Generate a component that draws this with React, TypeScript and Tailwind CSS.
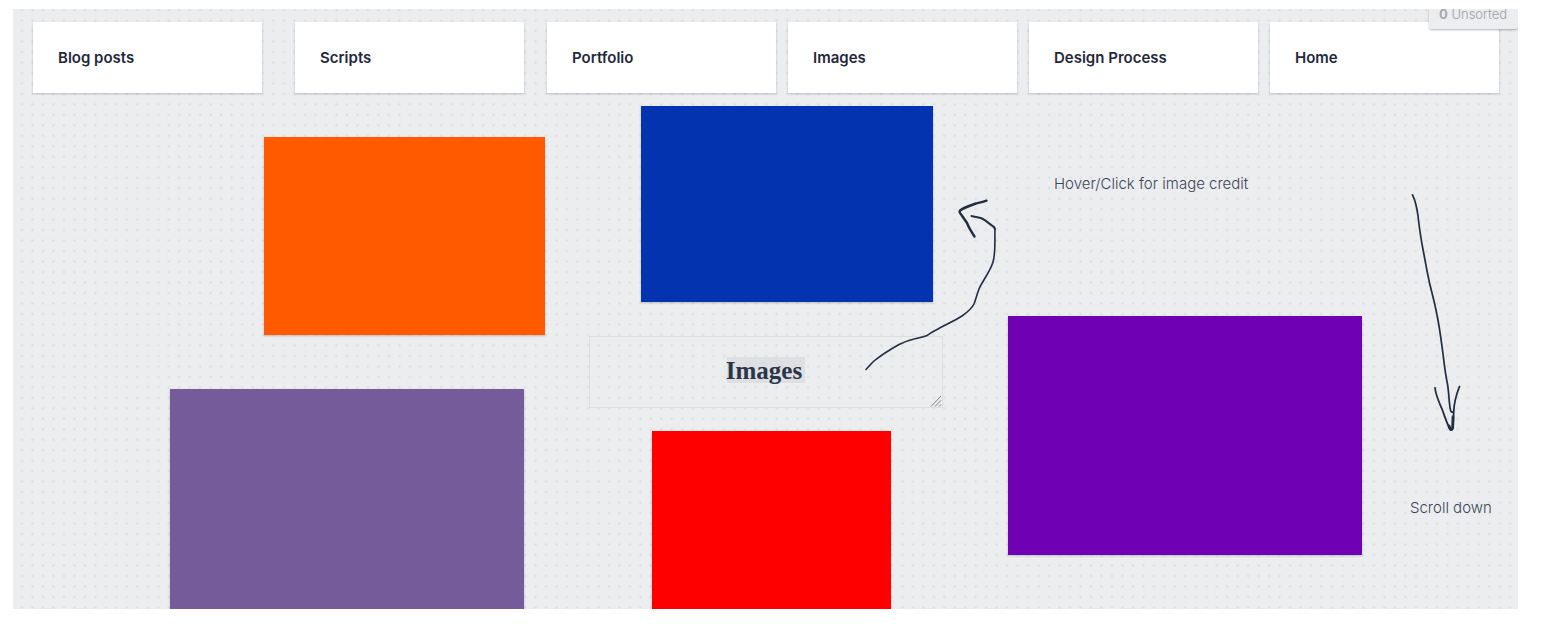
import React from "react";

const navCards = [
  { label: "Blog posts", spacing: "mr-[21px]" },
  { label: "Scripts", spacing: "mr-[11px]" },
  { label: "Portfolio", spacing: "" },
  { label: "Images", spacing: "" },
  { label: "Design Process", spacing: "" },
  { label: "Home", spacing: "" },
];

const swatches = [
  "left-[251px] top-[128px] h-[198px] w-[281px] bg-[#ff5a00]",
  "left-[628px] top-[97px] h-[196px] w-[292px] bg-[#0433b0]",
  "left-[157px] top-[380px] h-[239px] w-[354px] bg-[#765b9a]",
  "left-[639px] top-[422px] h-[239px] w-[239px] bg-[#ff0000]",
  "left-[995px] top-[307px] h-[239px] w-[354px] bg-[#6f00b4]",
];

function DotGrid() {
  return (
    <svg className="absolute inset-0 h-full w-full" aria-hidden="true">
      <defs>
        <pattern id="dots" x="3.8" y="-4.2" width="10.48" height="10.48" patternUnits="userSpaceOnUse">
          <circle cx="5.24" cy="5.24" r="1.25" fill="#dcdee1" />
        </pattern>
      </defs>
      <rect width="100%" height="100%" fill="url(#dots)" />
    </svg>
  );
}

function CurvedArrow() {
  return (
    <svg
      className="pointer-events-none absolute left-[847px] top-[185px] h-[180px] w-[145px]"
      viewBox="860 194 145 180"
      fill="none"
      stroke="#222d42"
      strokeLinecap="round"
      strokeLinejoin="round"
      aria-hidden="true"
    >
      <path
        strokeWidth="1.6"
        d="M866 369.500C869 366.500 871 363.500 874 361C882 354.500 891 349 899 344.500C904 342 909 340 915 338.700C919 337.700 923 337 927 335.500C931 333 932 332 936 330C945 325 955 320.500 962 316C967 312.500 972 308 974 304C976 299 977 294 979 289C983 280 990 272 993 262C996 252 994.500 238 995 229"
      />
      <path strokeWidth="2" d="M995 229C994.700 227.500 994 226.800 992.500 226C989 223.500 986 220.500 982 218.500C979 217.300 975 217 971.500 216" />
      <path strokeWidth="2.400" d="M986.500 200.700C983 202 980 202.600 976 203.500C970 205.500 964 207.500 960 210.500C959 212 960 213.500 961.500 215L967 223C969 228 971.500 232 974.500 236.500" />
    </svg>
  );
}

function DownArrow() {
  return (
    <svg
      className="pointer-events-none absolute left-[1395px] top-[181px] h-[246px] w-[56px]"
      viewBox="1408 190 56 246"
      fill="none"
      stroke="#222d42"
      strokeLinecap="round"
      strokeLinejoin="round"
      aria-hidden="true"
    >
      <path
        strokeWidth="1.7"
        d="M1412.500 194.800C1415 200 1417 208 1418 216C1419.500 229 1421 240 1423.500 252C1425.500 263 1427.500 274 1430 285C1432.500 295 1435 304 1437 315C1439.500 327 1441 339 1442.500 350C1444 361 1445 373 1447.500 384C1449 393 1449 404 1450.500 410C1451 412 1452 412.500 1453 412"
      />
      <path
        strokeWidth="1.8"
        d="M1435 388C1436 396 1439 402 1442 409C1445 417 1447 424 1450 429C1451 430.500 1453 430 1453 427L1453.700 412C1454 403 1456.500 394 1459.500 386.500"
      />
      <path strokeWidth="2.800" d="M1449 426C1449.700 428 1450.500 430 1451.500 429.500C1453 429 1452.700 425 1453 417" />
    </svg>
  );
}

function TitleBox() {
  return (
    <div className="absolute left-[576px] top-[327px] h-[72px] w-[354px]">
      <div className="absolute left-[138px] top-[21px] h-[26px] w-[78px] bg-[#dedfe1]" />
      <textarea
        aria-label="Images"
        defaultValue="Images"
        spellCheck={false}
        className="relative block h-full w-full resize-none overflow-hidden border border-[#dcdee0] bg-transparent py-[18px] pr-2 pl-1 text-center font-['Liberation_Serif',serif] text-[25px] leading-8 font-bold text-[#2a3549] outline-none"
      />
      <svg className="pointer-events-none absolute right-[1px] bottom-[1px] h-3 w-3" viewBox="0 0 12 12" fill="none" aria-hidden="true">
        <path d="M1 11.500L11 1M5 11.500L11 5.300M9 11.500L11 9.500" stroke="#7e8288" />
      </svg>
    </div>
  );
}

export default function App() {
  return (
    <div className="flex h-screen bg-white pt-[9px] pr-[34px] pb-[22px] pl-[13px] font-['Inter',sans-serif]">
      <main className="relative min-w-0 flex-1 overflow-hidden bg-[#ebedee]">
        <DotGrid />

        <nav className="relative flex gap-3 pt-[13px] pr-[19px] pl-5">
          {navCards.map((card) => (
            <a
              key={card.label}
              href="#"
              className={`flex flex-1 items-center bg-white px-[25px] pt-6 pb-[23px] text-[15px] leading-6 font-semibold text-[#1f293b] shadow-[0_1px_2px_rgba(30,40,60,0.25)] ${card.spacing}`}
            >
              {card.label}
            </a>
          ))}
        </nav>

        {swatches.map((swatch) => (
          <div key={swatch} className={`absolute shadow-[0_1px_2px_rgba(30,40,60,0.25)] ${swatch}`} />
        ))}

        <TitleBox />
        <CurvedArrow />
        <DownArrow />

        <p className="absolute top-[163px] left-[1041px] text-[15px] leading-6 font-light whitespace-nowrap text-[#3b4557]">
          Hover/Click for image credit
        </p>
        <p className="absolute top-[487px] left-[1397px] text-[15px] leading-6 font-light whitespace-nowrap text-[#3b4557]">
          Scroll down
        </p>

        <button
          type="button"
          className="absolute top-0 right-0 flex h-5 w-[89px] items-start rounded-b-[3px] bg-[#ebedee]/95 pl-[10px] text-[13px] leading-[10px] font-light whitespace-pre text-[#9aa1ab] shadow-[0_1px_2px_rgba(30,40,60,0.35)]"
        >
          <b className="font-bold text-[#a3a9b2]">0</b> Unsorted
        </button>
      </main>
    </div>
  );
}
